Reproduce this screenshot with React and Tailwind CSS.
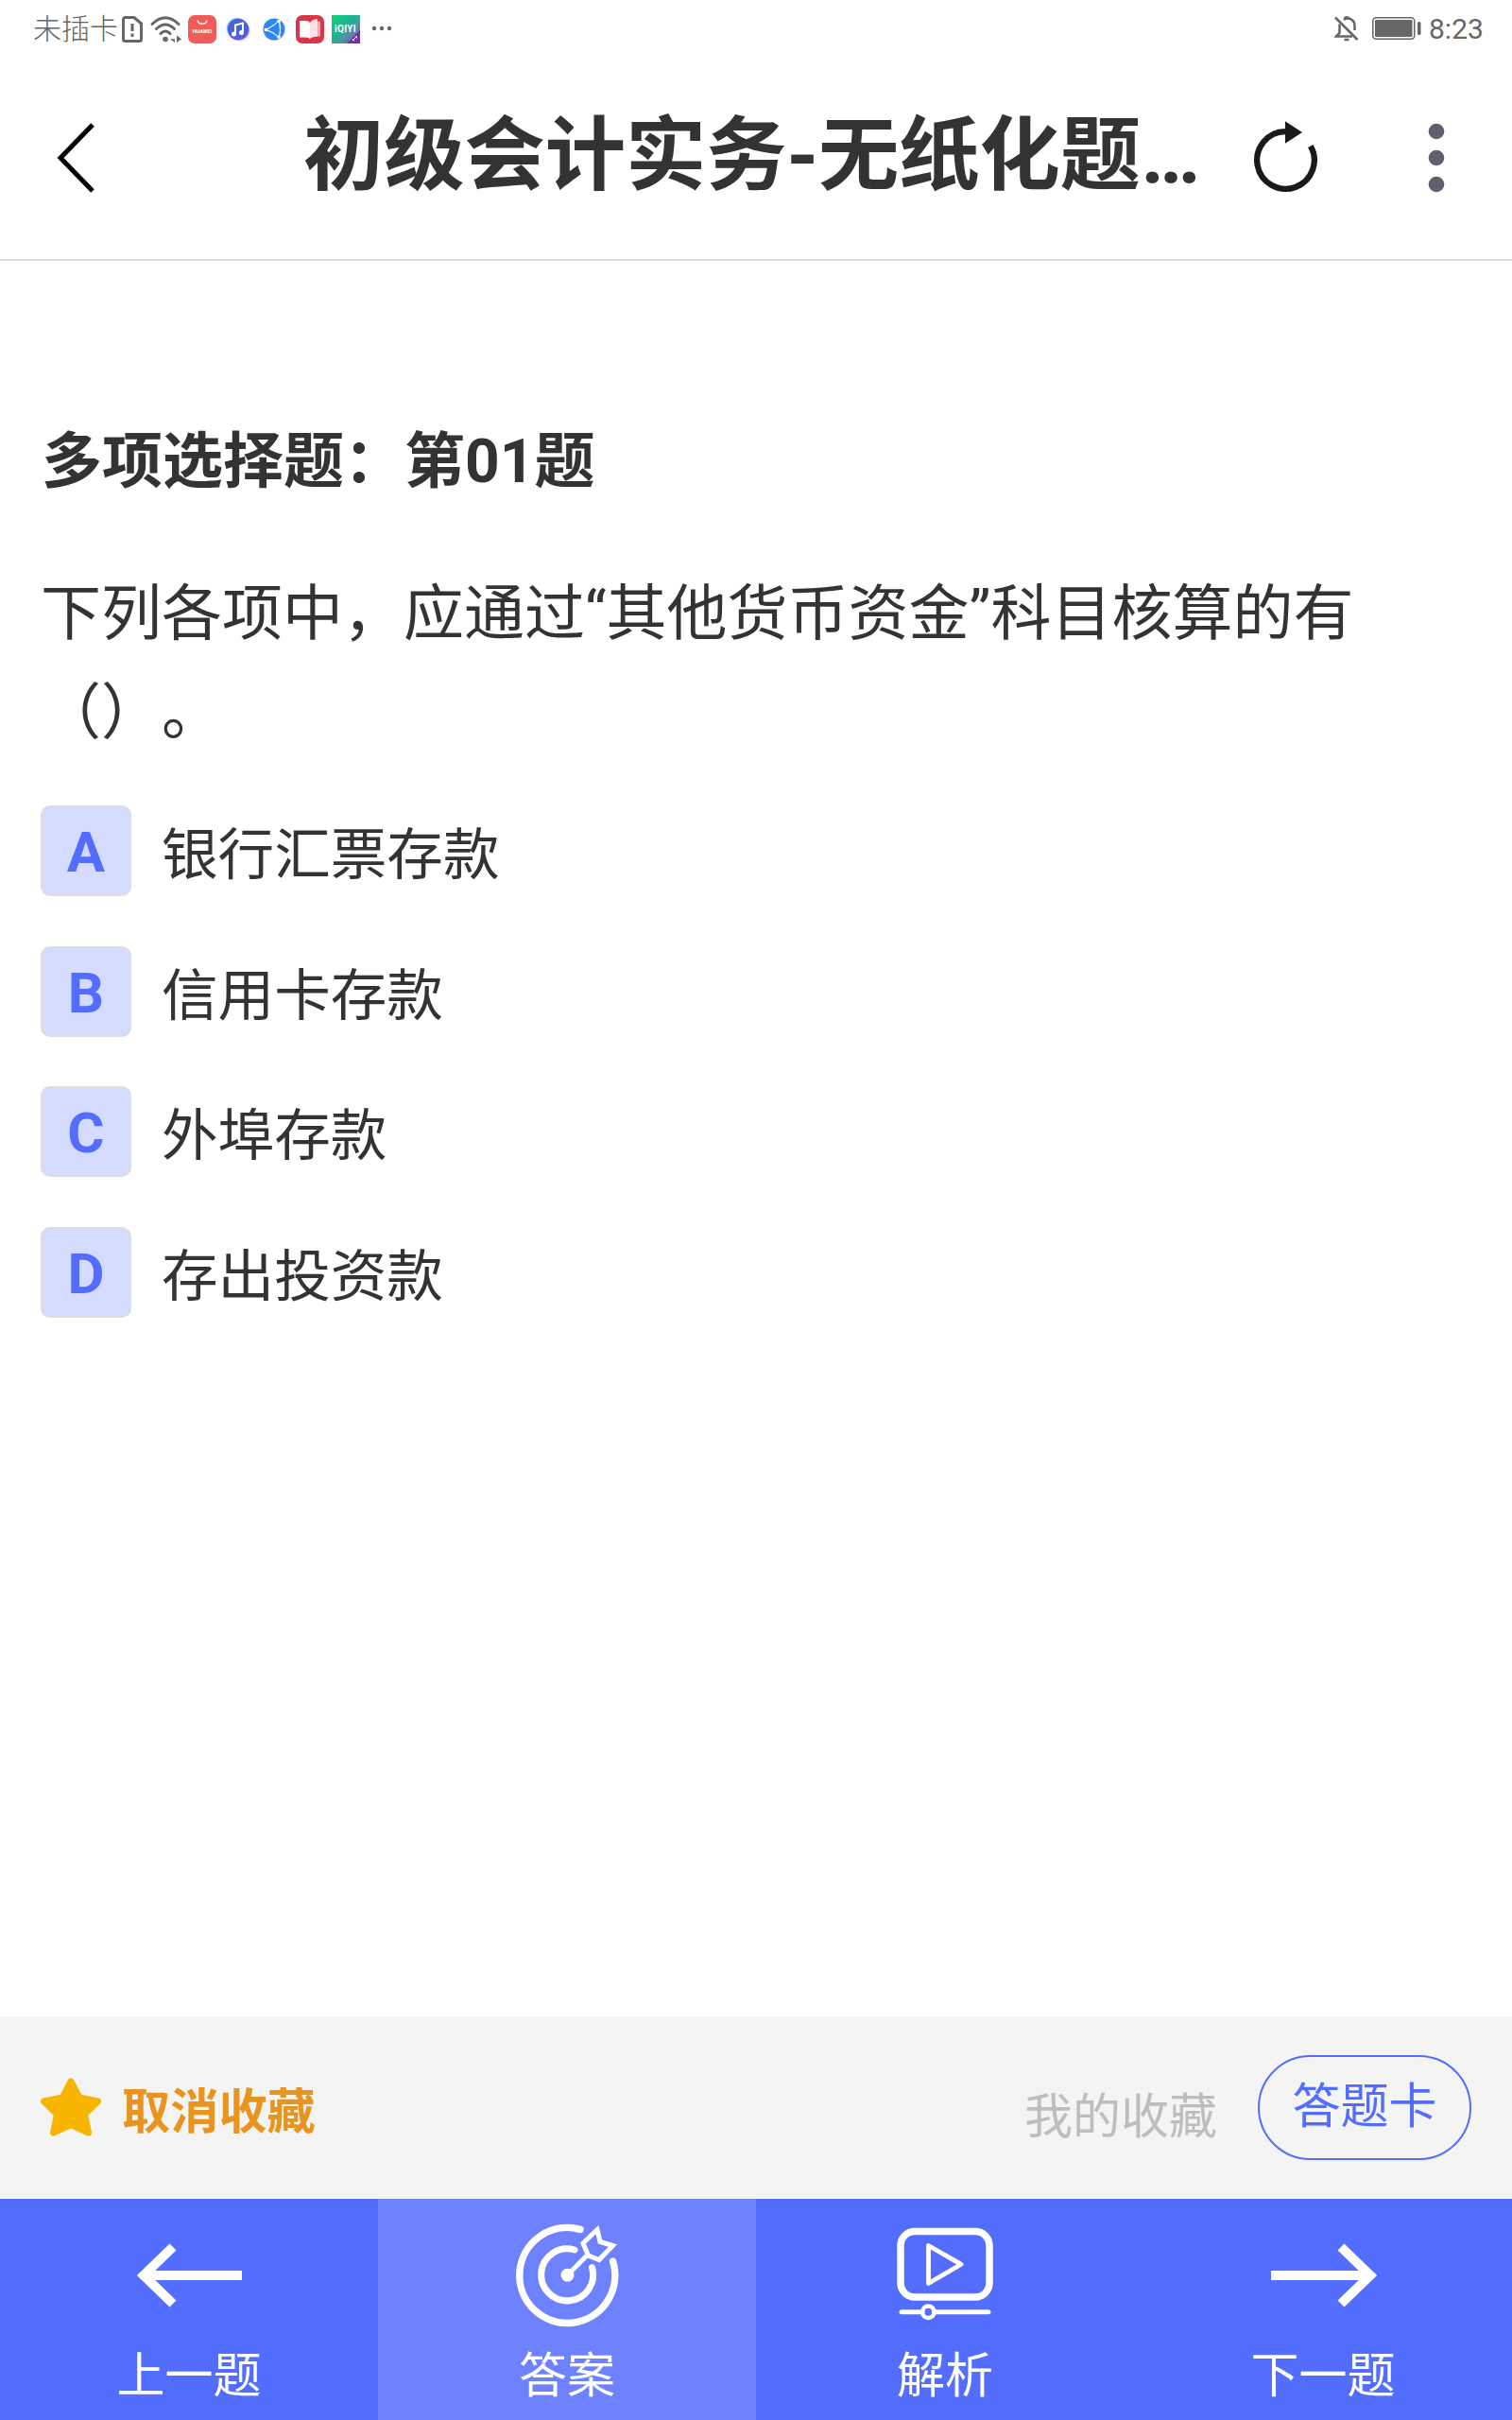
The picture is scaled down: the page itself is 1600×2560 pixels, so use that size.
import clsx from "clsx";

const options = [
  { key: "A", text: "银行汇票存款" },
  { key: "B", text: "信用卡存款" },
  { key: "C", text: "外埠存款" },
  { key: "D", text: "存出投资款" },
];

function StatusBar() {
  return (
    <div className="h-15 pl-[35px] pr-[31px] flex items-center text-[#666]">
      <span className="w-[94px] mt-[2px] text-[30px] leading-[60px] font-light">未插卡</span>

      <svg className="mt-[1px] w-[22px] h-7" viewBox="0 0 22 28" fill="none" stroke="currentColor" strokeWidth="3">
        <path d="M3.5 1.5H13L20.5 8V24.5a2 2 0 0 1-2 2h-15a2 2 0 0 1-2-2v-21a2 2 0 0 1 2-2Z" />
        <path d="M11 8v8M11 18.5v3.5" />
      </svg>

      <svg className="mt-[1px] ml-2 w-[33px] h-7" viewBox="0 0 33 28" fill="none" stroke="currentColor" strokeWidth="3" strokeLinecap="round">
        <path d="M2 8.500Q16 -5 30 8.500M6.500 13.500Q16 4.500 25.500 13.500M11 18.500Q16 13.500 21 18.500" />
        <circle cx="16" cy="24.500" r="2.800" fill="currentColor" stroke="none" />
        <path d="M26 20.500v7.500l-5-3.700h5M28 20.500v7.500l5-3.700z" fill="currentColor" stroke="none" />
      </svg>

      <div className="mt-[1px] ml-[7px] size-[30px] rounded-[7px] bg-[#f15b58] flex flex-col items-center text-white">
        <svg className="mt-[5px] w-3 h-[6px]" viewBox="0 0 12 6" fill="none" stroke="currentColor" strokeWidth="1.300">
          <path d="M1 .5c1 5 9 5 10 0" />
        </svg>
        <span className="mt-[3px] text-[5.500px] leading-[6px] font-bold">HUAWEI</span>
      </div>

      <svg className="mt-[1px] ml-[10px] size-[26px]" viewBox="0 0 26 26">
        <rect width="26" height="26" rx="6" fill="#f7f7fa" />
        <circle cx="14" cy="14" r="11" fill="#dc8cf0" />
        <circle cx="12" cy="12" r="11" fill="#6ec8f5" />
        <circle cx="13" cy="13" r="11.200" fill="#4a63dc" />
        <path d="M10 18V8.500l8-2V16" fill="none" stroke="#fff" strokeWidth="2" />
        <circle cx="8.500" cy="18" r="2.500" fill="#fff" />
        <circle cx="16.500" cy="16.500" r="2.500" fill="#fff" />
      </svg>

      <svg className="mt-[1px] ml-[13px] size-[24px]" viewBox="0 0 24 24" fill="none" stroke="#fff" strokeWidth="1.200">
        <circle cx="12" cy="12" r="11.500" fill="#2f86f6" stroke="none" />
        <path d="M17 2.500Q13 8 3 12.500Q12 15 17 21M17 2.500Q20 12 17 21" />
        <circle cx="17" cy="3.500" r="1.200" fill="#fff" />
        <circle cx="3.500" cy="12.500" r="1.200" fill="#fff" />
        <circle cx="17" cy="20" r="1.200" fill="#fff" />
      </svg>

      <svg className="mt-[1px] ml-[11px] size-[30px]" viewBox="0 0 30 30">
        <rect width="30" height="30" rx="7" fill="#d93547" />
        <path d="M19 6.500h7v16h-7z" fill="#f5a6ae" />
        <path d="M4 6h6.500q3.500 0 4.500 2v17q-1-1.500-4.500-1.500H4z" fill="#fff" />
        <path d="M15 8q2-3.500 8-4v18.500q-6 .5-8 2.500z" fill="#fde0e3" />
      </svg>

      <div className="mt-[1px] ml-2 size-[30px] relative bg-linear-to-br from-[#0ed66f] via-[#22ab98] to-[#7a2bb5]">
        <svg className="absolute right-0 bottom-0 size-[14px]" viewBox="0 0 14 14">
          <path d="M14 0v14H0z" fill="#7130a5" />
          <path d="M6 11l5-5M6 9.500l2 2M9 6.500l2 2" stroke="#fff" />
        </svg>
        <span className="absolute left-[3px] top-[10px] text-[10px] leading-[10px] font-bold tracking-[0.3px] text-white">
          iQIYI
        </span>
      </div>

      <svg className="ml-3 w-[22px] h-[6px]" viewBox="0 0 22 6" fill="currentColor">
        <circle cx="3" cy="3" r="2.200" />
        <circle cx="11" cy="3" r="2.200" />
        <circle cx="19" cy="3" r="2.200" />
      </svg>

      <svg className="ml-auto w-[26px] h-7" viewBox="0 0 26 28" fill="none" stroke="currentColor" strokeWidth="2.500">
        <path d="M1 2.500 24.500 26" />
        <path d="M5.500 9.500v9.500L2 22.500h17" />
        <path d="M10 5c5-3.500 11.500 0 11.500 6v5" />
        <path d="M10.500 3.500a3 3 0 0 1 5 0" />
        <path d="M10.500 26h5" />
      </svg>

      <svg className="ml-[14px] w-[52px] h-6" viewBox="0 0 52 24">
        <rect x=".75" y=".75" width="44" height="22.500" rx="3.500" fill="none" stroke="currentColor" strokeWidth="1.500" />
        <rect x="3" y="3" width="39.500" height="18" rx="1" fill="currentColor" />
        <rect x="48" y="5" width="3.500" height="14" rx="1.500" fill="currentColor" />
      </svg>

      <span className="ml-2 w-[57px] mt-[2px] text-[30px] leading-[60px]">8:23</span>
    </div>
  );
}

function Header() {
  return (
    <header className="h-[216px] border-b-2 border-[#ddd] flex items-start text-[#333]">
      <button type="button" aria-label="返回" className="ml-[60px] mt-[70px]">
        <svg className="w-10 h-[74px]" viewBox="0 0 40 74" fill="none" stroke="#000" strokeWidth="5">
          <path d="M38 2 4 37l34 35" />
        </svg>
      </button>

      <h1 className="ml-[221px] w-[960px] mt-[43px] text-[85.250px] leading-[124px] font-bold whitespace-nowrap">
        初级会计实务-无纸化题…
      </h1>

      <button type="button" aria-label="刷新" className="ml-[43px] mt-[66px]">
        <svg className="w-[72px] h-20" viewBox="0 0 72 80" fill="none" stroke="#1a1a1a" strokeWidth="6.300">
          <path d="M36 13.200A30.300 30.300 0 1 0 62.800 28.500" />
          <path d="M36 2.300v23.400L54 14z" fill="#1a1a1a" stroke="none" />
        </svg>
      </button>

      <button type="button" aria-label="更多" className="ml-[115px] mt-[70px]">
        <svg className="w-[18px] h-[74px]" viewBox="0 0 18 74" fill="#5f5f70">
          <circle cx="9" cy="9" r="8.300" />
          <circle cx="9" cy="37" r="8.300" />
          <circle cx="9" cy="65" r="8.300" />
        </svg>
      </button>
    </header>
  );
}

function Option({ option }) {
  return (
    <li className="flex items-center h-24">
      <span className="size-24 pt-[3px] rounded-[10px] border-2 border-[#ddd] bg-[#d5dbff] text-[#536dfe] text-[60px] leading-[89px] font-bold text-center">
        {option.key}
      </span>
      <span className="ml-8 mt-[10px] text-[59.600px] leading-24">{option.text}</span>
    </li>
  );
}

function Tab({ label, active, children }) {
  return (
    <button
      type="button"
      className={clsx(
        "flex-1 flex flex-col items-center text-white",
        active ? "bg-[#6e82ff]" : "bg-[#536dfe]"
      )}
    >
      <svg className="mt-[14px] w-[140px] h-[134px]" viewBox="0 0 140 134" fill="none" stroke="currentColor">
        {children}
      </svg>
      <span className="mt-[2px] text-[51px] leading-[76px]">{label}</span>
    </button>
  );
}

function App() {
  return (
    <div className="w-[1600px] h-[2560px] bg-white flex flex-col overflow-hidden text-[#333] font-[Roboto,'Noto_Sans_CJK_SC',sans-serif] [text-spacing-trim:space-all]">
      <StatusBar />
      <Header />

      <main className="flex-1 pt-[161px] px-[43px]">
        <h2 className="ml-[1px] text-[64px] leading-[104px] font-bold">多项选择题：第01题</h2>

        <p className="mt-[56px] text-[64px] leading-[105px]">
          下列各项中，应通过“其他货币资金”科目核算的有（）。
        </p>

        <ul className="mt-[45px] flex flex-col gap-[52.500px]">
          {options.map((option) => (
            <Option key={option.key} option={option} />
          ))}
        </ul>
      </main>

      <section className="h-[192px] px-[43px] bg-[#f4f4f4] flex items-center">
        <svg className="w-16 h-[62px]" viewBox="0 0 64 62" fill="#f7b500" stroke="#f7b500" strokeWidth="7" strokeLinejoin="round">
          <path d="M32 4 41 21 60.500 25 46.500 38.500 50.500 58 32 49.500 13.500 58 17.500 38.500 3.500 25 23 21z" />
        </svg>
        <span className="ml-[22px] mt-3 text-[51.200px] font-bold text-[#e8951f]">取消收藏</span>
        <span className="ml-auto mt-[22px] text-[51px] text-[#bdbdbd]">我的收藏</span>
        <button
          type="button"
          className="ml-[43px] w-[226px] h-[111px] rounded-full border-2 border-[#536dfe] text-[51px] leading-[104px] text-[#536dfe]"
        >
          答题卡
        </button>
      </section>

      <nav className="mt-[1px] h-[234px] flex">
        <Tab label="上一题">
          <path d="M126 67H24M53 37 22 67 53 97" strokeWidth="10" />
        </Tab>
        <Tab label="答案" active>
          <g strokeWidth="7.500" strokeLinecap="round">
            <path d="M84 18.400A50.500 50.500 0 1 0 118.500 52" />
            <path d="M78 40A27.500 27.500 0 1 0 96.500 58.500" strokeWidth="7" />
          </g>
          <circle cx="70.500" cy="66.700" r="7" fill="currentColor" stroke="none" />
          <path d="M70.500 66.700 92 45M92.500 46 87 33 102 18.500 105 31.500 118.500 35.500 104 50.500z" strokeWidth="5" />
        </Tab>
        <Tab label="解析">
          <rect x="23" y="20.500" width="94" height="69.500" rx="15" strokeWidth="7.500" />
          <path d="M52.500 35.500v40L87 55.300z" strokeWidth="4.800" strokeLinejoin="round" />
          <path d="M24 105.700h22M58.500 105.700H116" strokeWidth="5" strokeLinecap="round" />
          <circle cx="52.300" cy="105.700" r="6.200" strokeWidth="4.500" />
        </Tab>
        <Tab label="下一题">
          <path d="M15 67h102M89 37l31 30-31 30" strokeWidth="10" />
        </Tab>
      </nav>
    </div>
  );
}

export default App;
